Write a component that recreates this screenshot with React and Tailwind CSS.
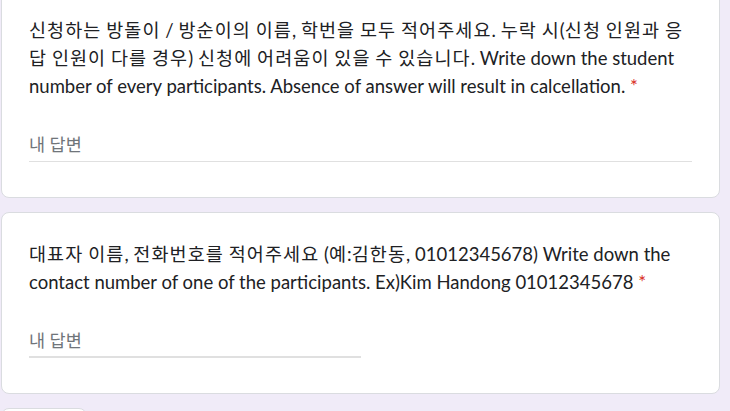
import React from 'react';

// Hangul runs get extra tracking so the widths follow the reference font
function Mixed({ text }) {
  return text.split(/([\uAC00-\uD7A3]+)/).map((part, i) =>
    /[\uAC00-\uD7A3]/.test(part) ? (
      <span key={i} className="tracking-[1.1px]">{part}</span>
    ) : (
      part
    )
  );
}

function Question({ title, half }) {
  return (
    <div className="bg-white border border-[#dadce0] rounded-lg px-[27px] pt-[27px] pb-[35px]">
      <div className="text-[18.5px] leading-[28px] text-[#202124]">
        <Mixed text={title} />
        <span className="text-[#d93025]"> *</span>
      </div>
      <div className={half ? 'mt-[33px] w-1/2' : 'mt-[33px]'}>
        <div
          className={
            half
              ? 'text-[17.5px] leading-6 text-[#70757a] pb-[3px] border-b-2 border-[#e0e0e0]'
              : 'text-[17.5px] leading-6 text-[#70757a] pb-[4px] border-b border-[#e0e0e0]'
          }
        >
          내 답변
        </div>
      </div>
    </div>
  );
}

export default function App() {
  return (
    <div className="h-[411px] overflow-hidden bg-[#f0ebf8] pl-[1px] font-['Lato','Noto_Sans_CJK_KR',sans-serif]">
      <div className="w-[719px] -mt-[12px] flex flex-col gap-[14px]">
        <Question title="신청하는 방돌이 / 방순이의 이름, 학번을 모두 적어주세요. 누락 시(신청 인원과 응답 인원이 다를 경우) 신청에 어려움이 있을 수 있습니다. Write down the student number of every participants. Absence of answer will result in calcellation." />
        <Question
          half
          title="대표자 이름, 전화번호를 적어주세요 (예:김한동, 01012345678) Write down the contact number of one of the participants. Ex)Kim Handong 01012345678"
        />
        <div className="w-[86px] h-[40px] bg-white border border-[#dadce0] rounded-lg"></div>
      </div>
    </div>
  );
}
